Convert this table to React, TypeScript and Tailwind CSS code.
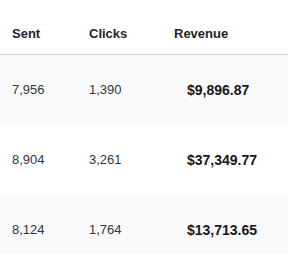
import React from "react";

const rows = [
  { sent: "7,956", clicks: "1,390", revenue: "$9,896.87", shaded: true },
  { sent: "8,904", clicks: "3,261", revenue: "$37,349.77", shaded: false },
  { sent: "8,124", clicks: "1,764", revenue: "$13,713.65", shaded: true },
];

export default function App() {
  return (
    <div
      className="w-[288px] h-[254px] overflow-hidden bg-white"
      style={{ fontFamily: '"Liberation Sans", Arial, sans-serif' }}
    >
      <div className="grid grid-cols-[77px_85px_1fr] border-b border-[#cdd6e0] pt-[24px] pb-[10px] text-[13px] leading-5 font-bold text-[#1f2329]">
        <div className="pl-3">Sent</div>
        <div className="pl-3">Clicks</div>
        <div className="pl-3">Revenue</div>
      </div>
      {rows.map((r, i) => (
        <div
          key={i}
          className={`grid grid-cols-[77px_85px_1fr] h-[70px] items-center ${
            r.shaded ? "bg-[#f8f9fb]" : "bg-white"
          }`}
        >
          <div className="pl-3 text-[13px] text-[#33373d]">{r.sent}</div>
          <div className="pl-3 text-[13px] text-[#33373d]">{r.clicks}</div>
          <div className="pl-[25px] text-[14px] font-bold text-[#16181c]">{r.revenue}</div>
        </div>
      ))}
    </div>
  );
}
